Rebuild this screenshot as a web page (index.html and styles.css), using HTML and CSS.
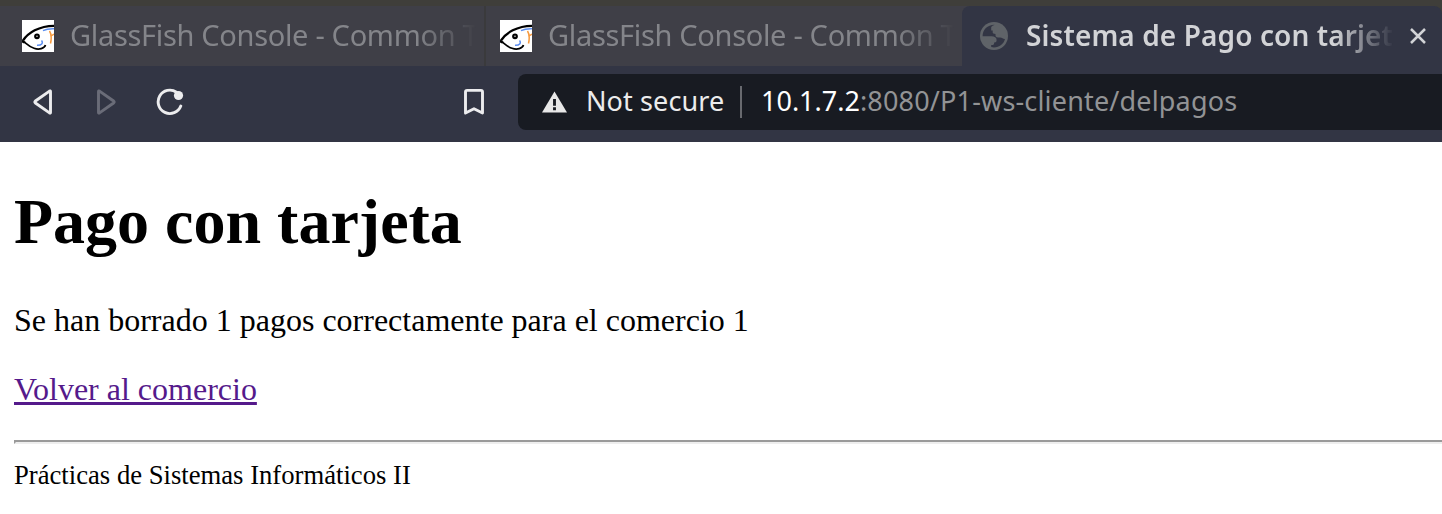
FILE: index.html
```html
<!DOCTYPE html>
<html lang="es">
<head>
<meta charset="utf-8">
<title>Sistema de Pago con tarjeta</title>
<link rel="stylesheet" href="styles.css">
</head>
<body>
<svg width="0" height="0" class="defs">
  <symbol id="fish" viewBox="0 0 32 32">
    <rect width="32" height="32" fill="#fff"/>
    <path d="M1 20.500C6 13 17 5.800 32 5.800" fill="none" stroke="#000" stroke-width="2.300"/>
    <path d="M0 20.800C3.500 22 5.500 26.500 12 28.200C17 30.200 22.500 28.500 23.500 25" fill="none" stroke="#000" stroke-width="1.700"/>
    <path d="M0 20l4 2-2 1.500-2-1z" fill="#000"/>
    <circle cx="15" cy="16.300" r="1.800" fill="#fff" stroke="#000" stroke-width="2.200"/>
    <path d="M21 10.600C24 9.200 28 8.700 32 8.800M19.500 20.500c2 2.500 0 5-4.500 4.700" fill="none" stroke="#5b8def" stroke-width="1.500"/>
    <path d="M27.500 11c2 3 2 8 1 12.500M29 16l3-2" fill="none" stroke="#f79a3e" stroke-width="1.500"/>
  </symbol>
</svg>
<header class="tabs">
  <div class="tab">
    <svg class="favicon"><use href="#fish"/></svg>
    <span class="tab-title">GlassFish Console - Common T</span>
  </div>
  <div class="tab second">
    <svg class="favicon"><use href="#fish"/></svg>
    <span class="tab-title">GlassFish Console - Common T</span>
  </div>
  <div class="tab-corner"><div class="tab active">
    <svg class="globe" viewBox="0 0 28 28"><circle cx="14" cy="14" r="14" fill="#5f6368"/><path d="M14.500 2.700C14 3.300 11.800 3.500 11.200 5.200V8.500H12.700V10.500C12.700 11.400 13.600 11.900 15.500 11.900V13.500C15.500 15.200 17.200 15.600 20 15.600C22.600 15.600 22.800 17.200 25 17C23.700 22 19.500 25.400 14 25.400L11.200 25V23H13C14.200 22.500 14 21.600 14.200 20.500C16 20.500 16.600 19.700 16.600 18C16.600 15.300 14.500 14.200 11.500 14.200H2.600C2.400 7.800 7.500 2.700 14.500 2.700Z" fill="#323544"/></svg>
    <span class="tab-title">Sistema de Pago con tarjet</span>
    <svg class="close" viewBox="0 0 16 16"><path d="M1 1l14 14M15 1L1 15" fill="none" stroke="#d2d3d6" stroke-width="2.500"/></svg>
  </div></div>
</header>
<nav class="toolbar">
  <svg class="icon back" viewBox="0 0 20 28"><path d="M17.500 3.500v21q0 1-1 .4L2.400 15q-1-1 0-2L16.500 3.100q1-.6 1 .4z" fill="none" stroke="#ececee" stroke-width="2.900" stroke-linejoin="round"/></svg>
  <svg class="icon forward" viewBox="0 0 20 28"><path d="M2.500 3.500v21q0 1 1 .4L17.600 15q1-1 0-2L3.500 3.100q-1-.6-1 .4z" fill="none" stroke="#6a6c78" stroke-width="2.900" stroke-linejoin="round"/></svg>
  <svg class="reload" viewBox="0 0 28 28"><path d="M20.500 4.200A11.700 11.700 0 1 0 24.800 18" fill="none" stroke="#ececee" stroke-width="2.900" stroke-linecap="round"/><circle cx="22.500" cy="7.500" r="4.600" fill="#ececee"/></svg>
  <svg class="bookmark" viewBox="0 0 20 28"><path d="M1.500 25V4q0-1.600 1.600-1.600h13.800q1.600 0 1.600 1.600v21L10 20.700z" fill="none" stroke="#ececee" stroke-width="2.900" stroke-linejoin="round"/></svg>
  <div class="address">
    <svg class="warning" viewBox="0 0 26 22"><path d="M13 0l13 22H0z" fill="#e8e8e8"/><path d="M13 8v7M13 16.500v3" stroke="#181b22" stroke-width="3"/></svg>
    <span class="security">Not secure</span>
    <span class="divider"></span>
    <span class="url"><span class="host">10.1.7.2</span><span class="path">:8080/P1-ws-cliente/delpagos</span></span>
  </div>
</nav>
<main class="page">
  <h1>Pago con tarjeta</h1>
  <p>Se han borrado 1 pagos correctamente para el comercio 1</p>
  <p><a href="#">Volver al comercio</a></p>
  <hr>
  <footer>Prácticas de Sistemas Informáticos II</footer>
</main>
</body>
</html>
```
FILE: styles.css
```css
* { box-sizing: border-box; }
body { margin: 0; overflow: hidden; background: #fff; font-family: "Noto Sans", sans-serif; }
svg { display: block; flex: none; }
.defs { display: none; }
.tabs { display: flex; height: 66px; padding-top: 6px; background: #3f3e3a; }
.tab { display: flex; align-items: center; width: 484px; height: 60px; padding-left: 22px; background: #3f3f47; color: #84858a; }
.tab.second { width: 478px; padding-left: 14px; border-left: 2px solid #3a3a3c; }
.favicon { width: 32px; height: 32px; margin-right: 16px; }
.tab-title { width: 406px; padding-bottom: 2px; overflow: hidden; white-space: nowrap; font-size: 29px; line-height: 40px; letter-spacing: -0.32px; mask-image: linear-gradient(to right, #000 calc(100% - 60px), transparent); }
.tab-corner { width: 480px; background: linear-gradient(to right, #3f3f47 50%, #3f3e3a 50%); }
.tab.active { width: 480px; padding-left: 18px; background: #323544; border-radius: 8px 8px 0 0; color: #d2d3d6; }
.globe { width: 28px; height: 28px; margin-right: 18px; }
.active .tab-title { width: 368px; font-weight: 600; font-size: 28px; letter-spacing: 0.1px; }
.close { width: 16px; height: 16px; margin-left: 16px; }
.toolbar { display: flex; align-items: center; height: 76px; padding: 0 0 4px 33px; background: #323544; }
.icon { width: 20px; height: 28px; }
.forward { margin-left: 43px; }
.reload { width: 28px; height: 28px; margin-left: 40px; }
.bookmark { width: 20px; height: 28px; margin-left: 280px; }
.address { display: flex; align-items: center; width: 924px; height: 56px; margin-left: 34px; padding-left: 24px; background: #181b22; border-radius: 8px 0 0 8px; font-size: 27px; line-height: 36px; white-space: nowrap; }
.warning { width: 25px; height: 22px; }
.security { width: 138px; margin-left: 19px; padding-bottom: 2px; color: #ececec; letter-spacing: 0.1px; }
.divider { width: 2px; height: 32px; margin: 0 19px 0 16px; background: #686a6f; }
.url { padding-bottom: 2px; color: #929395; }
.host { color: #fff; }
.path { letter-spacing: 0.17px; }
.page { padding: 43px 0 0 14px; font: 32px/37px "Liberation Serif", serif; color: #000; }
h1 { margin: 0 0 44px; font-size: 64px; line-height: 73px; }
p { margin: 0 0 32px; }
a { color: #551a8b; }
hr { height: 4px; margin: 0 0 16px; border: 2px solid; border-color: #9a9a9a #eee #eee #9a9a9a; border-right: 0; }
footer { font-size: 26.67px; line-height: 31px; }
```
